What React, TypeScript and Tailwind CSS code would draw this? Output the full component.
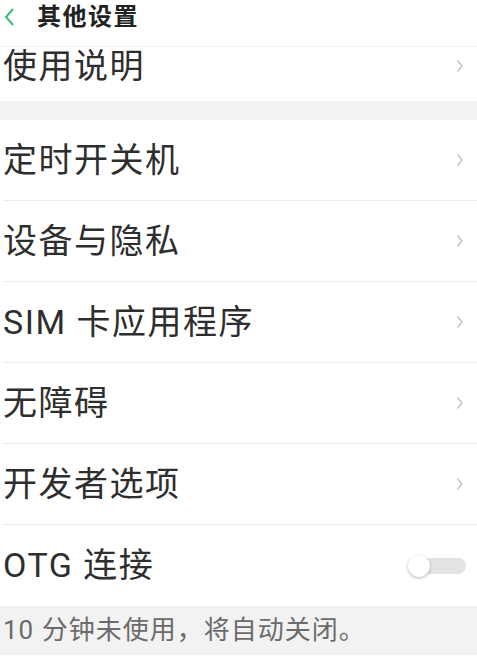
const rows = ["定时开关机", "设备与隐私", "SIM 卡应用程序", "无障碍", "开发者选项"];

const Chevron = () => (
  <svg width="8" height="14" viewBox="0 0 8 14" className="text-[#bdbdbd]">
    <path d="M1.5 1.5 L6 7 L1.5 12.5" fill="none" stroke="currentColor" strokeWidth="1.2" />
  </svg>
);

const Row = ({ label }: { label: string }) => (
  <div className="ml-[3px] flex h-[81px] items-center justify-between border-b border-[#ececec] pr-[13px]">
    <span className="text-[34px] tracking-[1.5px] text-[#2e2e2e]">{label}</span>
    <Chevron />
  </div>
);

export default function App() {
  return (
    <div className="h-[656px] w-[477px] overflow-hidden bg-white font-['Roboto','Noto_Sans_CJK_SC',sans-serif]">
      <div className="flex h-[47px] items-center border-b border-[#f1f1f1] pb-[12px]">
        <svg width="12" height="20" viewBox="0 0 12 20" className="ml-[3px] text-[#3cb87a]">
          <path d="M10 2 L3 10 L10 18" fill="none" stroke="currentColor" strokeWidth="2" />
        </svg>
        <span className="ml-[22px] text-[24px] font-bold tracking-[1.5px] text-[#222]">其他设置</span>
      </div>
      <div className="ml-[3px] flex h-[54px] items-center justify-between pb-[16px] pr-[13px]">
        <span className="text-[34px] tracking-[1.5px] text-[#2e2e2e]">使用说明</span>
        <Chevron />
      </div>
      <div className="h-[19px] bg-[#f2f2f2]" />
      {rows.map((r) => (
        <Row key={r} label={r} />
      ))}
      <div className="ml-[3px] flex h-[81px] items-center justify-between pr-[11px]">
        <span className="text-[34px] tracking-[1.5px] text-[#2e2e2e]">OTG 连接</span>
        <div className="relative h-[22px] w-[58px]">
          <div className="absolute right-0 top-[3px] h-[16px] w-[48px] rounded-full bg-[#e3e3e3]" />
          <div className="absolute left-0 top-0 h-[22px] w-[22px] rounded-full bg-white shadow-[0_1px_3px_rgba(0,0,0,0.3)]" />
        </div>
      </div>
      <div className="flex h-[49px] items-center bg-[#f2f2f2] pl-[3px]">
        <span className="text-[26px] tracking-[1px] text-[#6b6b6b]">10 分钟未使用，将自动关闭。</span>
      </div>
    </div>
  );
}
